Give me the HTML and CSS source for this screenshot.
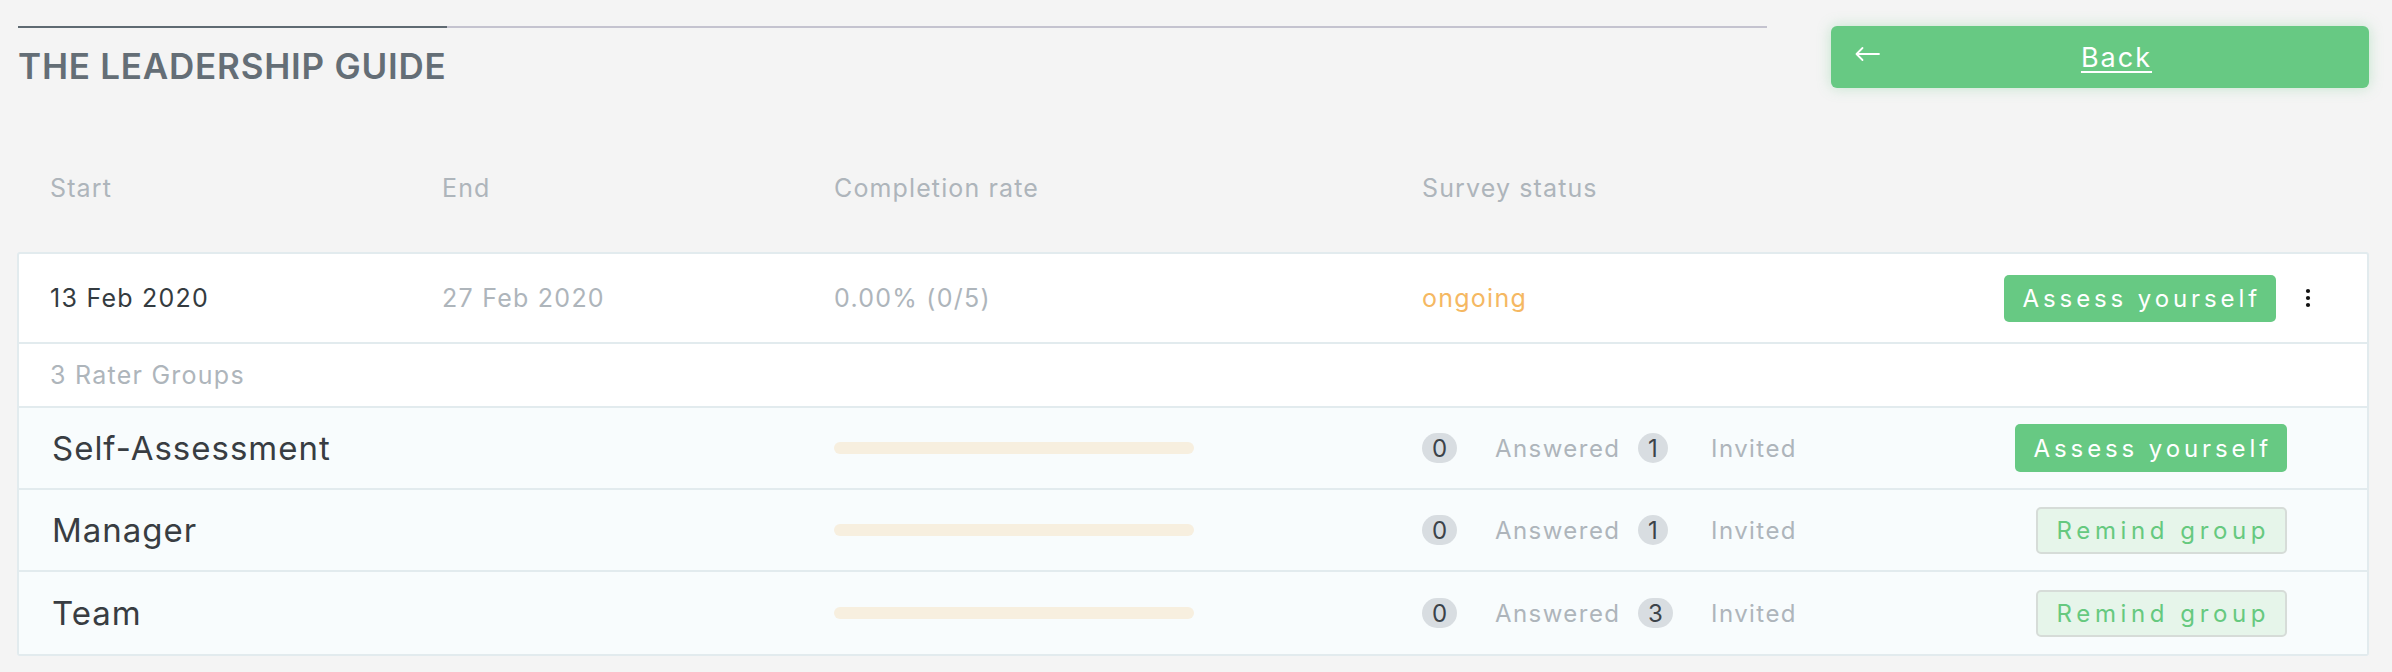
FILE: index.html
```html
<!DOCTYPE html>
<html lang="en">
<head>
<meta charset="utf-8">
<title>The Leadership Guide</title>
<link rel="stylesheet" href="styles.css">
</head>
<body>
<div class="page">
  <header class="top">
    <div class="heading">
      <div class="tab-line"><span class="tab-active"></span></div>
      <h1 class="title">THE LEADERSHIP GUIDE</h1>
    </div>
    <a class="back-btn" href="#">
      <svg class="back-arrow" width="26" height="16" viewBox="0 0 26 16" aria-hidden="true">
        <path d="M25 8H2.5M8.5 2L2.5 8l6 6" fill="none" stroke="#fff" stroke-width="1.8" stroke-linecap="round" stroke-linejoin="round"/>
      </svg>
      <span class="back-label">Back</span>
    </a>
  </header>

  <div class="col-head">
    <span>Start</span>
    <span>End</span>
    <span>Completion rate</span>
    <span>Survey status</span>
  </div>

  <div class="card">
    <div class="row main-row">
      <span class="val-dark">13 Feb 2020</span>
      <span class="val-light">27 Feb 2020</span>
      <span class="val-light">0.00% (0/5)</span>
      <span class="status">ongoing</span>
      <div class="actions">
        <button class="btn btn-green">Assess yourself</button>
        <span class="kebab">
          <svg width="6" height="20" viewBox="0 0 6 20" aria-hidden="true">
            <circle cx="3" cy="3" r="2.1" fill="#111"/>
            <circle cx="3" cy="10" r="2.1" fill="#111"/>
            <circle cx="3" cy="17" r="2.1" fill="#111"/>
          </svg>
        </span>
      </div>
    </div>

    <div class="row groups-label">3 Rater Groups</div>

    <div class="row group">
      <span class="group-name">Self-Assessment</span>
      <span class="bar-cell"><span class="bar"></span></span>
      <div class="stats">
        <span class="badge-cell"><span class="badge">0</span></span>
        <span class="stat-label">Answered</span>
        <span class="badge-cell"><span class="badge">1</span></span>
        <span class="stat-label">Invited</span>
      </div>
      <button class="btn btn-green">Assess yourself</button>
    </div>

    <div class="row group">
      <span class="group-name">Manager</span>
      <span class="bar-cell"><span class="bar"></span></span>
      <div class="stats">
        <span class="badge-cell"><span class="badge">0</span></span>
        <span class="stat-label">Answered</span>
        <span class="badge-cell"><span class="badge">1</span></span>
        <span class="stat-label">Invited</span>
      </div>
      <button class="btn btn-light">Remind group</button>
    </div>

    <div class="row group">
      <span class="group-name">Team</span>
      <span class="bar-cell"><span class="bar"></span></span>
      <div class="stats">
        <span class="badge-cell"><span class="badge">0</span></span>
        <span class="stat-label">Answered</span>
        <span class="badge-cell"><span class="badge">3</span></span>
        <span class="stat-label">Invited</span>
      </div>
      <button class="btn btn-light">Remind group</button>
    </div>
  </div>
</div>
</body>
</html>
```

FILE: styles.css
```css
* { box-sizing: border-box; }

body {
  margin: 0;
  background: #f4f4f4;
  font-family: Inter, "Noto Sans", "DejaVu Sans", sans-serif;
  color: #343b40;
}

.page {
  padding: 26px 23px 0 17px;
}

/* ---------- top ---------- */
.top {
  display: flex;
  justify-content: space-between;
  align-items: flex-start;
}

.heading {
  width: 1749px;
  margin-left: 1px;
}

.tab-line {
  height: 2px;
  background: #c4c3cf;
  display: flex;
}

.tab-active {
  width: 429px;
  background: #5f6a72;
}

.title {
  margin: 18px 0 0;
  font-size: 35px;
  line-height: 40px;
  font-weight: 600;
  letter-spacing: 0.022em;
  color: #646e76;
}

.back-btn {
  width: 538px;
  height: 62px;
  background: #67c983;
  border-radius: 6px;
  box-shadow: 0 0 14px rgba(103, 201, 131, 0.35);
  display: flex;
  align-items: center;
  padding: 0 16px 0 23px;
  color: #fff;
  text-decoration: none;
}

.back-arrow {
  flex: none;
  margin-top: -6px;
}

.back-label {
  flex: 1;
  text-align: center;
  font-size: 27px;
  letter-spacing: 2px;
  text-decoration: underline;
  text-underline-offset: 4px;
  text-decoration-thickness: 2px;
}

/* ---------- column heads ---------- */
.col-head {
  display: grid;
  grid-template-columns: 392px 392px 588px 1fr;
  padding: 0 0 0 33px;
  margin: 86px 0 50px;
  font-size: 25px;
  line-height: 28px;
  letter-spacing: 0.045em;
  color: #aeb5bb;
}

/* ---------- card ---------- */
.card {
  border: 2px solid #e2ebee;
  border-radius: 3px;
  background: #fff;
}

.row {
  border-bottom: 2px solid #e2ebee;
  padding-left: 31px;
}

.row:last-child {
  border-bottom: 0;
}

.main-row {
  display: grid;
  grid-template-columns: 392px 392px 588px 1fr auto;
  align-items: center;
  height: 90px;
  padding-right: 49px;
  font-size: 25px;
  letter-spacing: 0.05em;
}

.val-dark { color: #343b40; }
.val-light { color: #aeb5bb; }
.status { color: #f5b862; }

.actions {
  display: flex;
  align-items: center;
  gap: 22px;
}

.kebab {
  display: flex;
  width: 20px;
  justify-content: center;
}

.groups-label {
  height: 64px;
  display: flex;
  align-items: center;
  font-size: 25px;
  letter-spacing: 0.05em;
  color: #aeb5bb;
}

.group {
  display: grid;
  grid-template-columns: 784px 588px 1fr auto;
  align-items: center;
  height: 82px;
  padding-right: 80px;
  background: #f8fcfd;
}

.group-name {
  font-size: 33px;
  letter-spacing: 0.03em;
  color: #383d42;
  padding-left: 2px;
}

.bar-cell { display: flex; }

.bar {
  width: 360px;
  height: 12px;
  border-radius: 6px;
  background: #f7efdf;
}

.stats {
  display: grid;
  grid-template-columns: 73px 143px 73px auto;
  align-items: center;
  font-size: 24px;
  letter-spacing: 0.06em;
}

.badge-cell { display: flex; }

.badge {
  height: 30px;
  min-width: 29px;
  padding: 0 10px;
  border-radius: 15px;
  background: #d8dde1;
  color: #3c4349;
  display: flex;
  align-items: center;
  justify-content: center;
  letter-spacing: 0;
}

.stat-label { color: #aeb5bb; }

/* ---------- buttons ---------- */
.btn {
  font-family: inherit;
  font-size: 24px;
  border-radius: 5px;
  height: 48px;
  padding: 0 15px 0 19px;
  cursor: pointer;
}

.btn-green {
  background: #67c983;
  color: #fff;
  border: 0;
  letter-spacing: 3.9px;
}

.main-row .btn-green {
  height: 47px;
}

.btn-light {
  background: #e6f5ea;
  color: #66c97f;
  border: 2px solid #d6dcd8;
  height: 47px;
  letter-spacing: 4.6px;
}
```
